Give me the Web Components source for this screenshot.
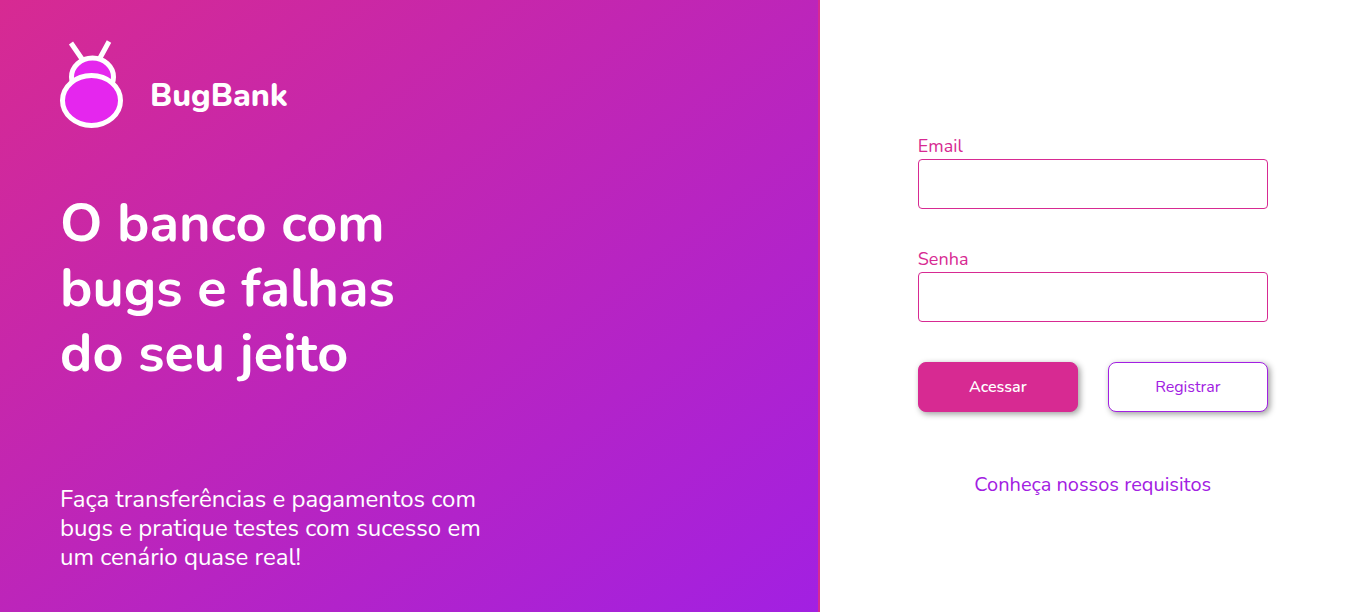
<!DOCTYPE html>
<html lang="pt-BR">
<head>
<meta charset="utf-8">
<meta name="viewport" content="width=device-width, initial-scale=1">
<title>BugBank</title>
<style>
  body { margin: 0; font-family: Nunito, Lato, "Open Sans", sans-serif; }
</style>
</head>
<body>
<bank-page>
  <bank-hero slot="hero">
    <bank-logo slot="logo">BugBank</bank-logo>
    <span slot="title">O banco com<br>bugs e falhas<br>do seu jeito</span>
    <span slot="text">Faça transferências e pagamentos com<br>bugs e pratique testes com sucesso em<br>um cenário quase real!</span>
  </bank-hero>
  <bank-login slot="login"></bank-login>
</bank-page>
<script>
const define = (name, html, setup) => customElements.define(name, class extends HTMLElement {
  constructor() {
    super();
    const template = document.createElement('template');
    template.innerHTML = html;
    this.attachShadow({ mode: 'open' }).append(template.content.cloneNode(true));
  }
  connectedCallback() { if (setup) setup(this, this.shadowRoot); }
});

define('bank-page', `
  <style>
    :host { display: grid; grid-template-columns: 60% 40%; min-height: 100vh; background: #fff; }
    @media (max-width: 800px) { :host { grid-template-columns: 100%; } }
  </style>
  <slot name="hero"></slot>
  <slot name="login"></slot>`);

define('bank-logo', `
  <style>
    :host { display: flex; align-items: flex-end; gap: 26px; color: #fff; font-size: 32px; line-height: 40px; font-weight: 800; }
    svg { display: block; flex: none; }
    span { padding-bottom: 12px; }
  </style>
  <svg width="64" height="88" viewBox="0 0 64 88" fill="#e526ee" stroke="#fff" stroke-width="5" aria-hidden="true">
    <path d="M11 3 22 19M49 1.500 40 18" fill="none"/>
    <ellipse cx="32.500" cy="37" rx="21" ry="19"/>
    <ellipse cx="31.500" cy="60.500" rx="29" ry="25"/>
  </svg>
  <span><slot></slot></span>`);

define('bank-hero', `
  <style>
    :host { display: flex; flex-direction: column; box-sizing: border-box; padding: 40px 60px;
      color: #fff; background: linear-gradient(to bottom right, #d72a92, #a220e2); border-right: 2px solid #d72a92; }
    h1 { margin: 63px 0 60px; font-size: 54px; line-height: 65px; font-weight: 700; }
    p { margin: auto 0 0; font-size: 24px; line-height: 29px; }
  </style>
  <slot name="logo"></slot>
  <h1><slot name="title"></slot></h1>
  <p><slot name="text"></slot></p>`);

define('bank-field', `
  <style>
    :host { display: block; }
    label { display: block; padding-bottom: 2px; color: #d72a92; font-size: 18px; line-height: 21px; }
    input { display: block; box-sizing: border-box; width: 100%; height: 50px; padding: 0 16px;
      border: 1px solid #d72a92; border-radius: 4px; background: #fff; font: inherit; }
  </style>
  <label for="field"><slot></slot></label>
  <input id="field">`, (host, root) => {
    root.querySelector('input').type = host.getAttribute('type') || 'text';
  });

define('bank-button', `
  <style>
    :host { display: block; flex: 1; }
    button { display: block; box-sizing: border-box; width: 100%; height: 50px; padding: 0;
      border: 1px solid #a220e2; border-radius: 8px; background: #fff; color: #a220e2;
      box-shadow: 2px 2px 6px rgba(0, 0, 0, .4); font: inherit; font-size: 16px; cursor: pointer; }
    :host([primary]) button { border-color: #d72a92; background: #d72a92; color: #fff; font-weight: 600; }
  </style>
  <button type="button"><slot></slot></button>`);

define('bank-login', `
  <style>
    :host { display: flex; align-items: center; justify-content: center; box-sizing: border-box; padding: 42px 20px 20px; }
    form { display: flex; flex-direction: column; gap: 40px; width: 100%; max-width: 350px; }
    .actions { display: flex; gap: 30px; }
    a { align-self: center; margin-top: 20px; color: #a220e2; font-size: 20px; line-height: 26px; text-decoration: none; }
  </style>
  <form>
    <bank-field type="email">Email</bank-field>
    <bank-field type="password">Senha</bank-field>
    <div class="actions">
      <bank-button primary>Acessar</bank-button>
      <bank-button>Registrar</bank-button>
    </div>
    <a href="#requisitos">Conheça nossos requisitos</a>
  </form>`);
</script>
</body>
</html>
